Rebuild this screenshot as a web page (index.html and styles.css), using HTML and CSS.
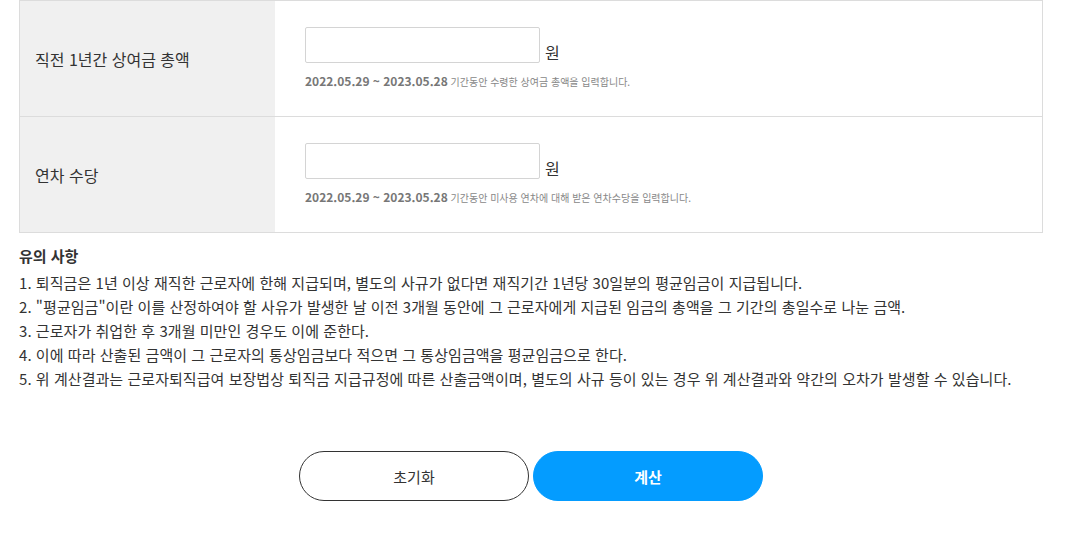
FILE: index.html
```html
<!DOCTYPE html>
<html lang="ko">
<head>
<meta charset="utf-8">
<link rel="stylesheet" href="styles.css">
</head>
<body>
<div class="wrap">
  <div class="form">
    <div class="row">
      <div class="label">직전 1년간 상여금 총액</div>
      <div class="field">
        <div class="inputline"><input class="inp" type="text"><span class="unit">원</span></div>
        <p class="hint"><b>2022.05.29 ~ 2023.05.28</b> 기간동안 수령한 상여금 총액을 입력합니다.</p>
      </div>
    </div>
    <div class="row">
      <div class="label">연차 수당</div>
      <div class="field">
        <div class="inputline"><input class="inp" type="text"><span class="unit">원</span></div>
        <p class="hint"><b>2022.05.29 ~ 2023.05.28</b> 기간동안 미사용 연차에 대해 받은 연차수당을 입력합니다.</p>
      </div>
    </div>
  </div>
  <div class="notes">
    <h3 class="notes-title">유의 사항</h3>
    <ol class="notes-list">
      <li>1. 퇴직금은 1년 이상 재직한 근로자에 한해 지급되며, 별도의 사규가 없다면 재직기간 1년당 30일분의 평균임금이 지급됩니다.</li>
      <li>2. "평균임금"이란 이를 산정하여야 할 사유가 발생한 날 이전 3개월 동안에 그 근로자에게 지급된 임금의 총액을 그 기간의 총일수로 나눈 금액.</li>
      <li>3. 근로자가 취업한 후 3개월 미만인 경우도 이에 준한다.</li>
      <li>4. 이에 따라 산출된 금액이 그 근로자의 통상임금보다 적으면 그 통상임금액을 평균임금으로 한다.</li>
      <li>5. 위 계산결과는 근로자퇴직급여 보장법상 퇴직금 지급규정에 따른 산출금액이며, 별도의 사규 등이 있는 경우 위 계산결과와 약간의 오차가 발생할 수 있습니다.</li>
    </ol>
  </div>
  <div class="buttons">
    <button class="btn btn-reset" type="button">초기화</button>
    <button class="btn btn-calc" type="button">계산</button>
  </div>
</div>
</body>
</html>
```

FILE: styles.css
```css
html, body {
  margin: 0;
  padding: 0;
  background: #fff;
}
body {
  font-family: "Noto Sans CJK KR", "Noto Sans", sans-serif;
  color: #333;
}
.wrap {
  width: 1024px;
  margin-left: 19px;
}
.form {
  border: 1px solid #dcdcdc;
}
.row {
  display: flex;
  height: 115px;
}
.row + .row {
  border-top: 1px solid #dcdcdc;
}
.label {
  width: 240px;
  flex: none;
  background: #f0f0f0;
  padding-left: 15px;
  display: flex;
  align-items: center;
  font-size: 16px;
  color: #333;
}
.field {
  padding: 26px 30px 0;
}
.inputline {
  display: flex;
  align-items: flex-end;
}
.inp {
  width: 235px;
  height: 36px;
  box-sizing: border-box;
  border: 1px solid #d4d4d4;
  border-radius: 2px;
  margin: 0;
  padding: 0 8px;
  font-family: inherit;
}
.unit {
  font-size: 16px;
  margin-left: 5px;
  line-height: 22px;
  color: #333;
}
.hint {
  margin: 9px 0 0;
  font-size: 10px;
  line-height: 18px;
  color: #888;
}
.hint b {
  font-size: 12px;
  color: #777;
}
.notes {
  margin-top: 12px;
}
.notes-title {
  margin: 0 0 4px;
  font-size: 15px;
  font-weight: bold;
  line-height: 22px;
  color: #333;
}
.notes-list {
  list-style: none;
  margin: 0;
  padding: 0;
}
.notes-list li {
  font-size: 15px;
  line-height: 24px;
  color: #333;
  letter-spacing: 0.05px;
}
.buttons {
  display: flex;
  justify-content: center;
  gap: 4px;
  margin-top: 60px;
}
.btn {
  width: 230px;
  height: 50px;
  border-radius: 25px;
  font-family: inherit;
  font-size: 15px;
  cursor: pointer;
  margin: 0;
}
.btn-reset {
  background: #fff;
  border: 1px solid #333;
  color: #333;
}
.btn-calc {
  background: #049cff;
  border: 1px solid #049cff;
  color: #fff;
  font-weight: bold;
}
```
